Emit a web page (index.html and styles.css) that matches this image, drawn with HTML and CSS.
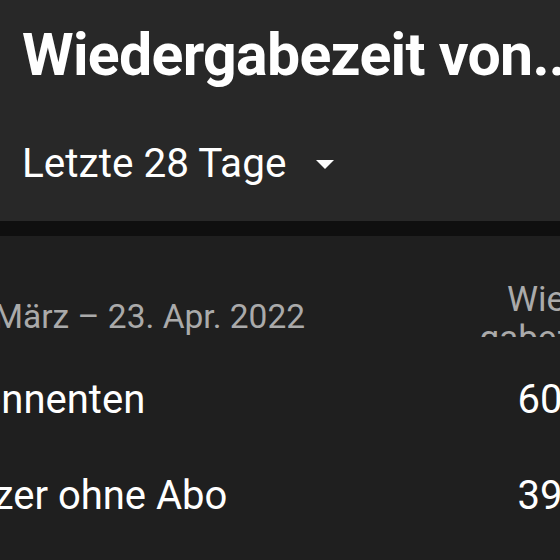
FILE: index.html
```html
<!DOCTYPE html>
<html lang="de">
<head>
<meta charset="utf-8">
<title>Wiedergabezeit</title>
<link rel="stylesheet" href="styles.css">
</head>
<body>
<header class="top">
  <h1 class="title">Wiedergabezeit von...</h1>
  <div class="range">
    <span class="range-label">Letzte 28 Tage</span>
    <span class="caret"></span>
  </div>
</header>
<div class="band"></div>
<main class="panel">
  <div class="table">
    <div class="head-date">27. März – 23. Apr. 2022</div>
    <div class="head-metric"><span class="hl">Wieder-</span><span class="hl hl-2">gabezeit</span></div>
    <div class="cell-label first">Abonnenten</div>
    <div class="cell-value first">60,4 %</div>
    <div class="cell-label">Nutzer ohne Abo</div>
    <div class="cell-value">39,6 %</div>
  </div>
</main>
</body>
</html>
```
FILE: styles.css
```css
html, body {
  margin: 0;
  padding: 0;
}
body {
  width: 560px;
  height: 560px;
  overflow: hidden;
  background: #1f1f1f;
  font-family: Roboto, "Noto Sans", sans-serif;
  color: #ffffff;
}
.top {
  background: #282828;
  height: 221px;
  box-sizing: border-box;
  padding: 19px 0 0 22px;
}
.title {
  margin: 0;
  font-size: 59px;
  line-height: 71px;
  font-weight: 700;
  white-space: nowrap;
  letter-spacing: -0.7px;
}
.range {
  margin-top: 49px;
  display: flex;
  align-items: center;
  gap: 30px;
  height: 48px;
}
.range-label {
  font-size: 40.5px;
  line-height: 48px;
}
.caret {
  width: 0;
  height: 0;
  border-left: 9px solid transparent;
  border-right: 9px solid transparent;
  border-top: 9px solid #ffffff;
  margin-top: 2px;
}
.band {
  height: 15px;
  background: #0f0f0f;
}
.panel {
  padding-top: 44px;
}
.table {
  margin-left: -70px;
  width: 695px;
  display: grid;
  grid-template-columns: 1fr auto;
  align-items: end;
}
.head-date {
  font-size: 33.5px;
  line-height: 40px;
  padding-left: 9px;
  color: #aaaaaa;
  white-space: nowrap;
}
.head-metric {
  font-size: 35px;
  line-height: 39px;
  color: #aaaaaa;
  height: 57px;
  overflow: hidden;
  display: flex;
  flex-direction: column;
  align-items: flex-end;
}
.hl {
  white-space: nowrap;
}
.hl-2 {
  padding-right: 13px;
}
.cell-label,
.cell-value {
  font-size: 40px;
  line-height: 44px;
  padding: 26px 0;
  white-space: nowrap;
}
.cell-label.first,
.cell-value.first {
  margin-top: 15px;
}
.cell-value {
  text-align: right;
  margin-right: -7px;
}
```
